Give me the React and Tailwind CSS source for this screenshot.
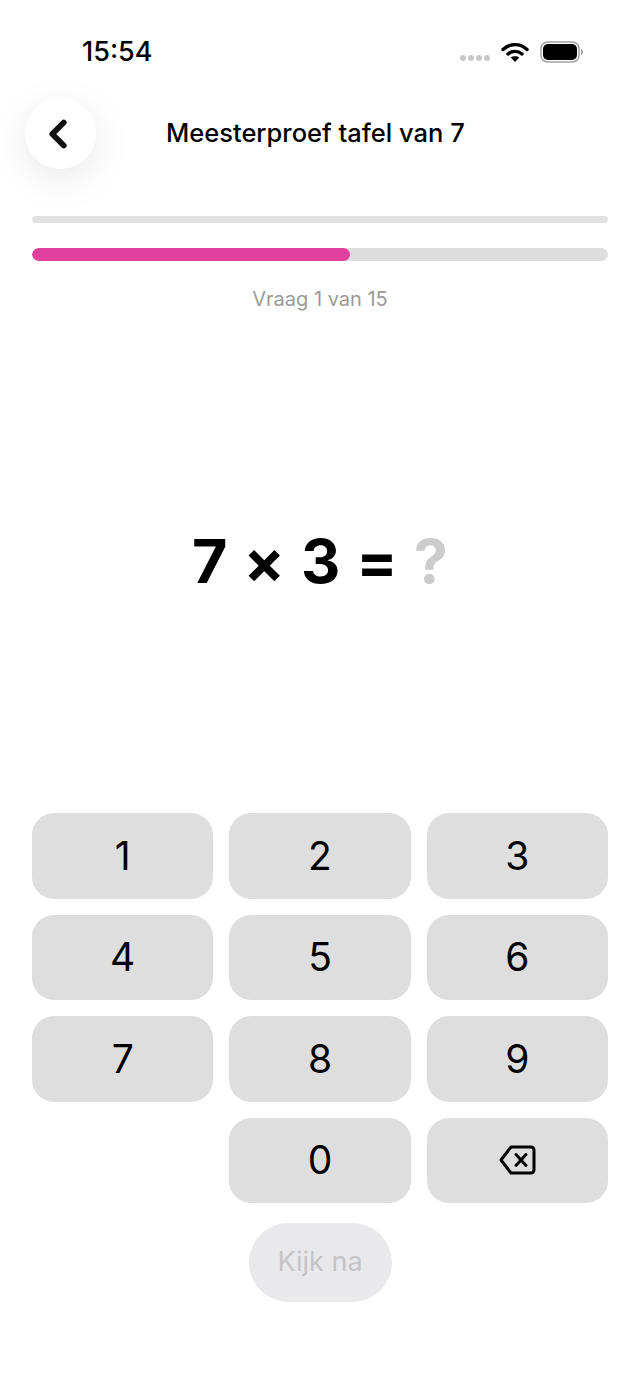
import { ChevronLeft } from 'lucide-react';

const keys = ['1', '2', '3', '4', '5', '6', '7', '8', '9'];

function Key({ children }) {
  return (
    <button className="h-[85.5px] rounded-[22px] bg-[#dedede] flex items-center justify-center text-[39px] text-black">
      {children}
    </button>
  );
}

function StatusBar() {
  return (
    <div className="h-[98px] pl-[82px] pr-[56px] pt-[35px] flex justify-between items-start">
      <span className="text-[27px] leading-[34px] font-medium text-black">15:54</span>
      <div className="flex items-center h-[34px]">
        <div className="flex gap-[2px] mt-[12px] mr-[11px]">
          <span className="w-[6px] h-[6px] rounded-full bg-[#c8c8c8]" />
          <span className="w-[6px] h-[6px] rounded-full bg-[#c8c8c8]" />
          <span className="w-[6px] h-[6px] rounded-full bg-[#c8c8c8]" />
          <span className="w-[6px] h-[6px] rounded-full bg-[#c8c8c8]" />
        </div>
        <svg width="28" height="22" viewBox="0 0 28 22" className="mr-[11px]">
          <path d="M2 8.5 C9 2 19 2 26 8.5" fill="none" stroke="#000" strokeWidth="3.4" strokeLinecap="round" />
          <path d="M7 13 C11 9.5 17 9.5 21 13" fill="none" stroke="#000" strokeWidth="3.4" strokeLinecap="round" />
          <path d="M14 21 L9.8 16.6 C12 14.8 16 14.8 18.2 16.6 Z" fill="#000" />
        </svg>
        <svg width="44" height="24" viewBox="0 0 44 24">
          <rect x="1" y="2" width="38" height="20" rx="6.5" fill="none" stroke="#a3a3a3" strokeWidth="1.5" />
          <rect x="3" y="4" width="34" height="16" rx="5" fill="#000" />
          <path d="M41 9 C42.5 9.5 43 10.5 43 12 C43 13.5 42.5 14.5 41 15 Z" fill="#a3a3a3" />
        </svg>
      </div>
    </div>
  );
}

export default function App() {
  return (
    <div className="w-[640px] h-[1391px] bg-white flex flex-col font-['Inter',sans-serif] overflow-hidden">
      <StatusBar />

      <div className="flex items-center h-[71px] pl-[25px]">
        <button className="w-[71px] h-[71px] rounded-full bg-white flex items-center justify-center shadow-[0_10px_40px_rgba(0,0,0,0.09)] shrink-0">
          <ChevronLeft size={46} strokeWidth={3} color="#111" className="-ml-[6px]" />
        </button>
        <h1 className="ml-[70px] text-[25.5px] font-medium text-black whitespace-nowrap">Meesterproef tafel van 7</h1>
      </div>

      <div className="px-[32px] mt-[47px]">
        <div className="h-[7px] rounded-full bg-[#e2e2e2]" />
        <div className="h-[13px] rounded-full bg-[#dddddd] mt-[25px] overflow-hidden">
          <div className="h-full w-[318px] rounded-full bg-[#e2409f]" />
        </div>
        <p className="mt-[26px] text-center text-[20px] leading-[24px] text-[#9a9a9a]">Vraag 1 van 15</p>
      </div>

      <div className="h-[502px] flex items-center justify-center gap-[16px] font-bold text-[61px] text-black">
        <span>7</span>
        <span>×</span>
        <span>3</span>
        <span>=</span>
        <span className="text-[#cccccc]">?</span>
      </div>

      <div className="px-[32px] grid grid-cols-3 gap-x-[16px] gap-y-[16px]">
        {keys.map((k) => (
          <Key key={k}>{k}</Key>
        ))}
        <div />
        <Key>0</Key>
        <Key>
          <svg width="37" height="30" viewBox="0 0 37 30" fill="none" stroke="#000" strokeWidth="3" strokeLinejoin="round" strokeLinecap="round">
            <path d="M12 2 H32 A3 3 0 0 1 35 5 V25 A3 3 0 0 1 32 28 H12 L2 15 Z" />
            <path d="M17 9.5 L27 20.5 M27 9.5 L17 20.5" />
          </svg>
        </Key>
      </div>

      <div className="flex justify-center mt-[20px]">
        <button className="w-[143px] h-[79px] rounded-[40px] bg-[#e9e9eb] text-[27px] text-[#c4c4c6]">Kijk na</button>
      </div>
    </div>
  );
}
